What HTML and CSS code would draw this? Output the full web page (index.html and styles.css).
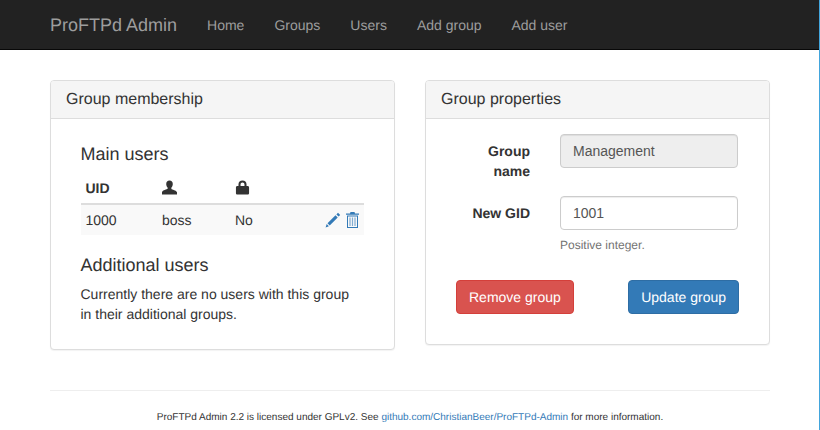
FILE: index.html
```html
<!DOCTYPE html>
<html lang="en">

<head>
  <meta charset="UTF-8" />
  <title>ProFTPd Admin</title>
  <link rel="stylesheet" href="styles.css">
</head>

<body>
  <nav class="navbar">
    <a class="brand" href="#">ProFTPd Admin</a>
    <a class="nav-link" href="#">Home</a>
    <a class="nav-link" href="#">Groups</a>
    <a class="nav-link" href="#">Users</a>
    <a class="nav-link" href="#">Add group</a>
    <a class="nav-link" href="#">Add user</a>
  </nav>

  <div class="container">
    <div class="columns">
      <section class="panel">
        <h3 class="panel-heading">Group membership</h3>
        <div class="panel-body membership">
          <h4 class="main-users">Main users</h4>
          <table class="users">
            <thead>
              <tr>
                <th class="col-uid">UID</th>
                <th class="col-name">
                  <svg class="head-icon" viewBox="0 0 16 16"><path d="M8 .5c2.200 0 3.500 1.500 3.500 3.700 0 1.600-.6 3.100-1.500 3.900v1.400c.6.6 5.400 1.500 6 3.600V15.500H0V12.900c.6-2.100 5.400-3 6-3.600V8.100C5.100 7.300 4.500 5.800 4.500 4.200 4.500 2 5.800.5 8 .5z"/></svg>
                </th>
                <th class="col-lock">
                  <svg class="head-icon" viewBox="0 0 16 16"><path d="M8 .5c2.600 0 4.300 1.700 4.300 4.200V6.500h1.200c.8 0 1.500.7 1.500 1.500v6c0 .8-.7 1.500-1.500 1.500h-11C1.700 15.500 1 14.800 1 14V8c0-.8.7-1.500 1.500-1.500h1.200V4.700C3.700 2.200 5.400.5 8 .5zm0 2.200c-1.300 0-2.100.8-2.100 2.100v1.700h4.200V4.800c0-1.300-.8-2.100-2.100-2.100z"/></svg>
                </th>
                <th></th>
              </tr>
            </thead>
            <tbody>
              <tr>
                <td>1000</td>
                <td>boss</td>
                <td>No</td>
                <td class="actions">
                  <a href="#"><svg class="pencil" viewBox="0 0 16 16"><path d="M13 .8L15.200 3l-1.600 1.600-2.200-2.200zM10.500 3.300l2.200 2.200-8 8-2.200-2.200zM1.700 12.100l2.200 2.200-3.300 1.100z"/></svg></a>
                  <a href="#"><svg class="trash" viewBox="0 0 13 16"><path d="M4.500 0h4l.5 1.500h4v1.300H0V1.500h4z"/><path d="M1 3.600h11V16H1zm1 1v10.400h9V4.600z" fill-rule="evenodd"/><path d="M3.400 5.500h1.200v8.500H3.400zm2.500 0h1.200v8.500H5.900zm2.500 0h1.200v8.500H8.400z" opacity=".6"/></svg></a>
                </td>
              </tr>
            </tbody>
          </table>
          <h4 class="additional">Additional users</h4>
          <p class="no-users">Currently there are no users with this group in their additional groups.</p>
        </div>
      </section>

      <section class="panel">
        <h3 class="panel-heading">Group properties</h3>
        <div class="panel-body properties">
          <form>
            <div class="form-row">
              <label class="form-label">Group name</label>
              <div class="form-field">
                <input class="input" type="text" value="Management" disabled>
              </div>
            </div>
            <div class="form-row">
              <label class="form-label">New GID</label>
              <div class="form-field">
                <input class="input" type="text" value="1001">
                <p class="help">Positive integer.</p>
              </div>
            </div>
            <div class="buttons">
              <a class="btn btn-danger" href="#">Remove group</a>
              <a class="btn btn-primary" href="#">Update group</a>
            </div>
          </form>
        </div>
      </section>
    </div>

    <footer class="footer">
      ProFTPd Admin 2.2 is licensed under GPLv2. See <a href="#">github.com/ChristianBeer/ProFTPd-Admin</a> for more information.
    </footer>
  </div>
</body>

</html>
```

FILE: styles.css
```css
* {
  box-sizing: border-box;
}

html {
  overflow: hidden;
}

body {
  margin: 0;
  height: 430px;
  font-family: "Liberation Sans", Arial, sans-serif;
  font-size: 14px;
  line-height: 20px;
  color: #333;
  background-color: #fff;
  border-right: 1px solid #42a5dc;
  text-rendering: geometricPrecision;
}

a {
  color: #337ab7;
  text-decoration: none;
}

.navbar {
  display: flex;
  align-items: center;
  height: 50px;
  padding: 0 15px 0 50px;
  background-color: #222;
  border-bottom: 1px solid #080808;
}

.brand {
  font-size: 18px;
  color: #9d9d9d;
  margin-right: 15px;
}

.nav-link {
  padding: 0 15px;
  color: #9d9d9d;
}

.container {
  width: 720px;
  margin-left: 50px;
}

.columns {
  display: grid;
  grid-template-columns: 345px 345px;
  column-gap: 30px;
  align-items: start;
  padding-top: 30px;
}

.panel {
  background-color: #fff;
  border: 1px solid #ddd;
  border-radius: 4px;
  box-shadow: 0 1px 1px rgba(0, 0, 0, .05);
}

.panel-heading {
  margin: 0;
  padding: 10px 15px;
  height: 38px;
  font-size: 16px;
  font-weight: normal;
  line-height: 18px;
  background-color: #f5f5f5;
  border-bottom: 1px solid #ddd;
  border-radius: 3px 3px 0 0;
}

.membership {
  padding: 15px 30px 15px 29.5px;
}

h4 {
  margin: 10px 0;
  font-size: 18px;
  font-weight: normal;
  line-height: 20px;
}

.main-users {
  margin-bottom: 9px;
}

.users {
  width: 100%;
  border-collapse: collapse;
  margin-bottom: 20px;
}

.users th {
  text-align: left;
  padding: 5px;
  height: 30px;
  border-bottom: 2px solid #ddd;
}

.users td {
  padding: 5px;
  height: 30px;
  background-color: #f9f9f9;
}

.col-uid {
  width: 76.5px;
}

.col-name {
  width: 73px;
}

.col-lock {
  width: 60px;
}

.head-icon {
  display: block;
  width: 15px;
  height: 15px;
  margin-top: -1px;
  fill: #333;
}

.actions {
  text-align: right;
  white-space: nowrap;
}

.actions a {
  margin-left: 1px;
}

.pencil {
  width: 16px;
  height: 16px;
  fill: #337ab7;
  vertical-align: -3px;
}

.trash {
  width: 13px;
  height: 16px;
  fill: #337ab7;
  vertical-align: -3px;
}

.additional {
  margin-top: 20px;
  margin-bottom: 9px;
}

p {
  margin: 0 0 10px;
}

.no-users {
  padding-right: 5px;
}

.properties {
  padding: 15px 30px 15px 30px;
}

.form-row {
  display: flex;
  margin-bottom: 15px;
}

.form-label {
  width: 74px;
  margin-right: 30px;
  padding-top: 7px;
  font-weight: bold;
  text-align: right;
}

.form-field {
  width: 178px;
}

.input {
  display: block;
  width: 100%;
  height: 34px;
  padding: 6px 12px;
  font-family: inherit;
  font-size: 14px;
  line-height: 20px;
  color: #555;
  background-color: #fff;
  border: 1px solid #ccc;
  border-radius: 4px;
  box-shadow: inset 0 1px 1px rgba(0, 0, 0, .075);
}

.input:disabled {
  background-color: #eee;
  opacity: 1;
}

.help {
  margin: 7px 0 10px;
  font-size: 12px;
  line-height: 17px;
  color: #737373;
}

.buttons {
  display: flex;
  justify-content: space-between;
  margin: 0 0 15px;
  padding-top: 1px;
}

.btn {
  padding: 6px 12px;
  height: 34px;
  color: #fff;
  border: 1px solid transparent;
  border-radius: 4px;
}

.btn-danger {
  background-color: #d9534f;
  border-color: #d43f3a;
}

.btn-primary {
  background-color: #337ab7;
  border-color: #2e6da4;
}

.footer {
  margin-top: 40px;
  padding-top: 17px;
  border-top: 1px solid #eee;
  font-size: 10px;
  text-align: center;
}
```
